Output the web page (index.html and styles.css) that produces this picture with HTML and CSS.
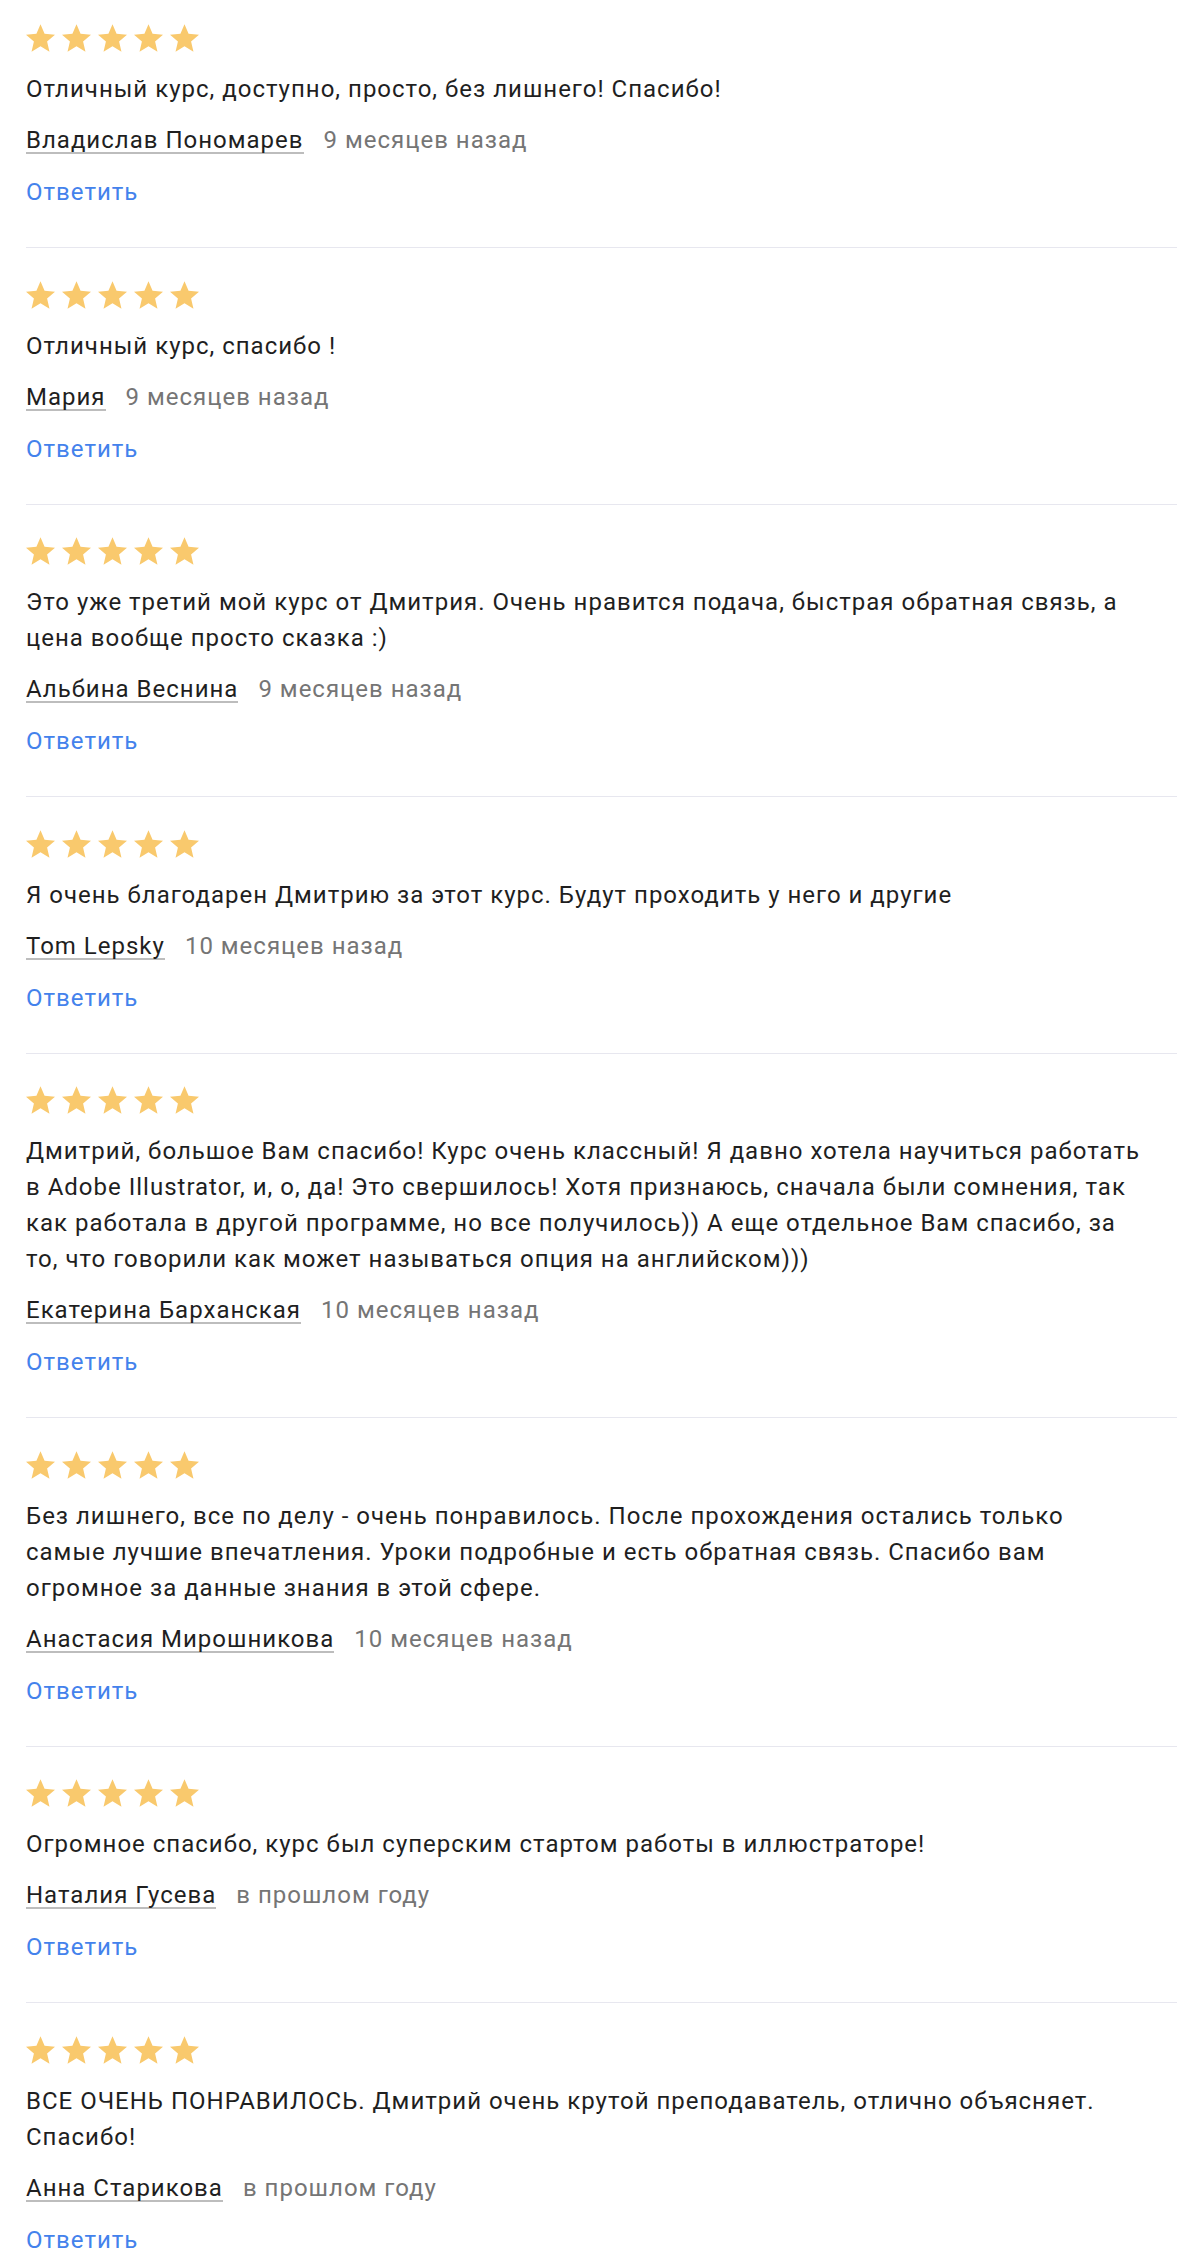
FILE: index.html
```html
<!DOCTYPE html>
<html lang="ru">
<head>
    <meta charset="UTF-8">
    <meta name="viewport" content="width=device-width, initial-scale=1.0">
    <title>Отзывы</title>
    <link rel="stylesheet" href="styles.css">
</head>
<body>
    <svg width="0" height="0" class="defs">
        <symbol id="star" viewBox="2 2 20 19">
            <path d="M12 17.27L18.18 21l-1.64-7.03L22 9.24l-7.19-.61L12 2 9.19 8.63 2 9.24l5.46 4.73L5.82 21z"/>
        </symbol>
    </svg>
    <div class="reviews" id="reviews">
        <!-- reviews are inserted here -->
    </div>
    <script>
        const reviews = [
            { text: "Отличный курс, доступно, просто, без лишнего! Спасибо!", author: "Владислав Пономарев", date: "9 месяцев назад" },
            { text: "Отличный курс, спасибо !", author: "Мария", date: "9 месяцев назад" },
            { text: "Это уже третий мой курс от Дмитрия. Очень нравится подача, быстрая обратная связь, а цена вообще просто сказка :)", author: "Альбина Веснина", date: "9 месяцев назад" },
            { text: "Я очень благодарен Дмитрию за этот курс. Будут проходить у него и другие", author: "Tom Lepsky", date: "10 месяцев назад" },
            { text: "Дмитрий, большое Вам спасибо! Курс очень классный! Я давно хотела научиться работать в Adobe Illustrator, и, о, да! Это свершилось! Хотя признаюсь, сначала были сомнения, так как работала в другой программе, но все получилось)) А еще отдельное Вам спасибо, за то, что говорили как может называться опция на английском)))", author: "Екатерина Барханская", date: "10 месяцев назад" },
            { text: "Без лишнего, все по делу - очень понравилось. После прохождения остались только самые лучшие впечатления. Уроки подробные и есть обратная связь. Спасибо вам огромное за данные знания в этой сфере.", author: "Анастасия Мирошникова", date: "10 месяцев назад" },
            { text: "Огромное спасибо, курс был суперским стартом работы в иллюстраторе!", author: "Наталия Гусева", date: "в прошлом году" },
            { text: "ВСЕ ОЧЕНЬ ПОНРАВИЛОСЬ. Дмитрий очень крутой преподаватель, отлично объясняет. Спасибо!", author: "Анна Старикова", date: "в прошлом году" }
        ];

        function renderStars(count) {
            let stars = '';
            for (let i = 0; i < count; i++) {
                stars += '<svg class="star"><use href="#star"></use></svg>';
            }
            return stars;
        }

        function displayReviews() {
            const container = document.getElementById('reviews');
            container.innerHTML = '';
            reviews.forEach(review => {
                container.innerHTML += `<div class="review">
                                            <div class="stars">${renderStars(5)}</div>
                                            <p class="review-text">${review.text}</p>
                                            <div class="review-meta">
                                                <span class="author">${review.author}</span>
                                                <span class="date">${review.date}</span>
                                            </div>
                                            <a href="#reply" class="reply">Ответить</a>
                                        </div>`;
            });
        }

        displayReviews();
    </script>
</body>
</html>
```

FILE: styles.css
```css
body {
    font-family: Roboto, "Noto Sans", sans-serif;
    font-size: 24px;
    line-height: 36px;
    letter-spacing: 1px;
    color: #1f1f1f;
    background-color: #ffffff;
    margin: 0;
    padding: 0 19px 0 26px;
}
.defs {
    position: absolute;
}
.review {
    padding: 32.5px 0 37px 0;
    border-bottom: 1px solid #e7e7ef;
}
.review:first-child {
    padding-top: 24px;
}
.review:last-child {
    border-bottom: none;
    padding-bottom: 10px;
}
.stars {
    display: flex;
    gap: 7px;
    height: 28px;
}
.star {
    width: 29px;
    height: 28px;
    fill: #f9c96d;
}
.review-text {
    margin: 19px 0 0 0;
    padding-right: 31px;
}
.review-meta {
    display: flex;
    align-items: baseline;
    gap: 20px;
    margin-top: 15px;
}
.author {
    display: inline-block;
    line-height: 23px;
    border-bottom: 2px solid #bdbdbd;
}
.date {
    color: #757575;
}
.reply {
    display: inline-block;
    margin-top: 16px;
    color: #4382ec;
    text-decoration: none;
}
```
